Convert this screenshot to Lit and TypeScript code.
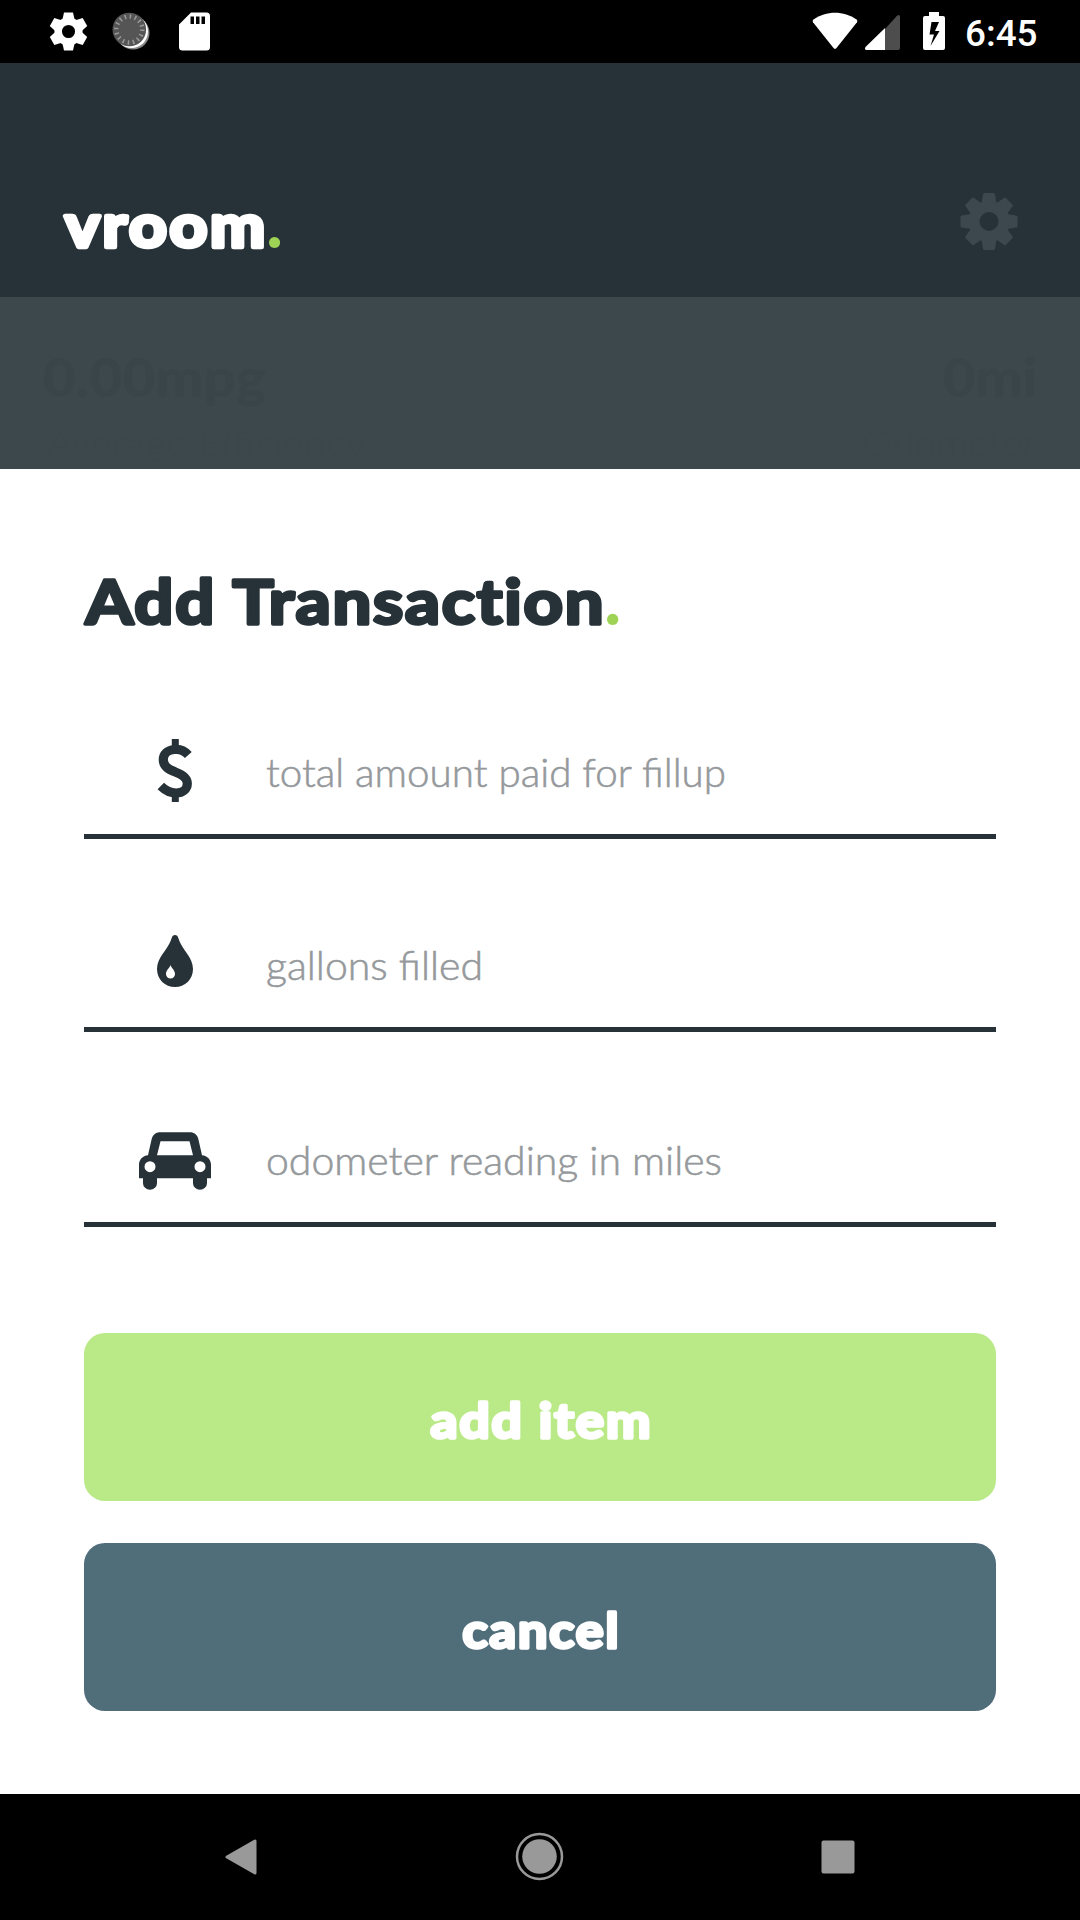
import { LitElement, html, svg, css } from "lit";
import { customElement } from "lit/decorators.js";

interface Fit {
  cls: string;
  w: number;
  h: number;
  x: number;
  y: number;
  len: number;
  text: string;
  dot?: number;
}

/** Draws a line of text fitted to an exact advance, with an optional round accent stop. */
const fit = (f: Fit) => html`<svg class="fit ${f.cls}" width=${f.w} height=${f.h} viewBox="0 0 ${f.w} ${f.h}">
  <text x=${f.x} y=${f.y} textLength=${f.len} lengthAdjust="spacingAndGlyphs">${f.text}</text>
  ${f.dot ? svg`<text class="stop" x=${f.dot} y=${f.y}>.</text>` : null}
</svg>`;

const teeth = (n: number, d: string) =>
  Array.from({ length: n }, (_, i) => svg`<path d=${d} transform="rotate(${(i * 360) / n})"/>`);

const dollar = html`<svg width="36" height="66" viewBox="-0.3 0 36 66">
  <path d="M14.500 2h7v10h-7zM14.500 55h7v10h-7z" fill="#263238"/>
  <path d="M31 18C26 12.500 20 12 17 12.500C10 13 6 17.500 6 22.500C6 30 12 32.500 18 35C26 38 30 41 30 46.500C30 52.500 25 56 19 56C12 56 7 52.500 3.500 49" fill="none" stroke="#263238" stroke-width="9.200"/>
</svg>`;

const drop = html`<svg width="36" height="54" viewBox="0 0 36 54">
  <path fill="#263238" fill-rule="evenodd" d="M18 1C16.300 1 15.300 2 14.800 3.700C11 16 0 23 0 35C0 45.500 8 53 18 53S36 45.500 36 35C36 23 25 16 21.200 3.700C20.700 2 19.700 1 18 1ZM13.500 31C14.500 34.500 18 36 18 40A4.500 4.500 0 0 1 9 40C9 36 12.500 34.500 13.500 31Z"/>
</svg>`;

const car = html`<svg width="73" height="58" viewBox="0.5 0.3 73 58">
  <path fill="#263238" fill-rule="evenodd" d="M22 .5H51C56 .5 59 3 60 8L63.500 23.500C69 24 72.500 28 72.500 33V46.500H68.500V51.500A7 6.500 0 0 1 54.500 51.500V46.500H18.500V51.500A7 6.500 0 0 1 4.500 51.500V46.500H.5V33C.5 28 4 24 9.500 23.500L13 8C14 3 17 .5 22 .5ZM22 9.500L18.500 23.500H54.500L51 9.500ZM11.500 29.500A5.500 5.500 0 1 0 11.500 40.500A5.500 5.500 0 1 0 11.500 29.500ZM61.500 29.500A5.500 5.500 0 1 0 61.500 40.500A5.500 5.500 0 1 0 61.500 29.500Z"/>
</svg>`;

const fields = [
  { icon: dollar, kind: "paid", text: "total amount paid for fillup", len: 460 },
  { icon: drop, kind: "gallons", text: "gallons filled", len: 217 },
  { icon: car, kind: "odometer", text: "odometer reading in miles", len: 456 },
];

@customElement("app-root")
export class AppRoot extends LitElement {
  static styles = css`
    :host { display: flex; flex-direction: column; width: 1080px; height: 1920px; overflow: hidden; background: #fff; font-family: Lato, "Open Sans", sans-serif; }
    svg { display: block; flex: none; }
    .fit { overflow: visible; }
    .bold text { font-weight: 700; stroke-linejoin: round; stroke-linecap: round; font-variant-ligatures: none; }
    .brand text { font-size: 59.500px; fill: #fff; stroke: #fff; stroke-width: 4.500px; letter-spacing: 2.500px; }
    .title text { font-size: 60.500px; fill: #263238; stroke: #263238; stroke-width: 3.400px; letter-spacing: 1.600px; }
    .fit .stop { fill: #9fd356; stroke: #9fd356; stroke-width: 2px; }
    .btn text { font-size: 47.500px; fill: #fff; stroke: #fff; stroke-width: 3.400px; letter-spacing: 1.800px; }
    .hint text { font-size: 40px; font-weight: 300; fill: #95999c; stroke: #95999c; stroke-width: 0.6px; }
    .value text { font-size: 54px; font-weight: 900; fill: #3a454a; }
    .caption text { font-size: 34px; font-weight: 300; fill: #3c474c; }
    .status { height: 63px; background: #000; flex: none; }
    .header { height: 234px; background: #263238; display: flex; justify-content: space-between; box-sizing: border-box; padding: 129px 62.5px 0 62px; flex: none; }
    .stats { height: 172px; background: #3d484d; display: flex; justify-content: space-between; box-sizing: border-box; padding: 50px 44px 0; flex: none; }
    .stat { display: flex; flex-direction: column; }
    .right { align-items: flex-end; }
    .sheet { height: 1325px; box-sizing: border-box; padding: 90px 84px 0; display: flex; flex-direction: column; flex: none; }
    .fields { display: flex; flex-direction: column; margin-top: 43px; }
    .field { box-sizing: border-box; border-bottom: 5px solid #263238; display: flex; align-items: flex-end; }
    .field.paid { height: 147px; }
    .field.gallons { height: 193px; }
    .field.odometer { height: 195px; }
    .icon { width: 182px; display: flex; justify-content: center; flex: none; }
    .paid .icon { padding-bottom: 31px; }
    .gallons .icon { padding-bottom: 39px; }
    .odometer .icon { padding-bottom: 32px; }
    .buttons { display: flex; flex-direction: column; gap: 42px; margin-top: 106px; }
    .button { height: 168px; border-radius: 21px; display: flex; justify-content: center; }
    .add { background: #b9ea87; }
    .cancel { background: #506d7a; }
    .nav { height: 126px; background: #000; flex: none; }
    .clock { font: 500 37px Roboto, sans-serif; fill: #fff; }
  `;

  render() {
    return html`
      <div class="status">
        <svg width="1080" height="63" viewBox="0 0 1080 63">
          <g fill="#fff" transform="translate(68.500 31.500)">
            ${teeth(6, "M-4.500 -19H4.500L6.500 -10H-6.500Z")}
            <circle r="10.300" fill="none" stroke="#fff" stroke-width="7.500"/>
          </g>
          <circle cx="133" cy="33" r="16.500" fill="#888"/>
          <circle cx="131.500" cy="31.500" r="16.500" fill="#fff"/>
          <circle cx="129.300" cy="29.500" r="16.800" fill="#555"/>
          <circle cx="129.300" cy="29.500" r="13" fill="none" stroke="#999" stroke-width="4.500" stroke-dasharray="1.500 3.605"/>
          <path fill="#fff" fill-rule="evenodd" d="M191 12.500H206.500Q210 12.500 210 16V47Q210 50.500 206.500 50.500H182.500Q179 50.500 179 47V24.500ZM190.500 16.500V24H194V16.500ZM196 16.500V24H199.500V16.500ZM201.500 16.500V24H205V16.500Z"/>
          <path fill="#fff" d="M813.500 19.500C826 10.500 844 10.500 856.500 19.500Q858 20.800 857 22.200L836.500 48Q835 49.700 833.500 48L813 22.200Q812 20.800 813.500 19.500Z"/>
          <path fill="#4d4d4d" d="M885 29L897 15.800Q900 13.800 900 17V48Q900 50 898 50H885Z"/>
          <path fill="#fff" d="M885 28V50H866.500Q864 49.500 865.500 47Z"/>
          <path fill="#fff" fill-rule="evenodd" d="M929 12H939V16H943Q945 16 945 18V48Q945 50 943 50H925Q923 50 923 48V18Q923 16 925 16H929ZM931.500 22L929.500 34.500H934L930.500 46L939.500 31H935L939 22Z"/>
          <text class="clock" x="965" y="46" textLength="72.500" lengthAdjust="spacingAndGlyphs">6:45</text>
        </svg>
      </div>

      <div class="header">
        ${fit({ cls: "bold brand", w: 230, h: 80, x: 3, y: 54.5, len: 203, text: "vroom", dot: 205.5 })}
        <svg width="58" height="58" viewBox="-29 -29.4 58 58">
          <g fill="#3d484e">
            ${teeth(8, "M-4.500 -28.500H4.500Q6 -28.500 6 -27L7.500 -18H-7.500L-6 -27Q-6 -28.500 -4.500 -28.500Z")}
            <circle r="15" fill="none" stroke="#3d484e" stroke-width="11"/>
          </g>
        </svg>
      </div>

      <div class="stats">
        <div class="stat">
          ${fit({ cls: "value", w: 220, h: 60, x: -1, y: 50, len: 223, text: "0.00mpg" })}
          ${fit({ cls: "caption", w: 320, h: 50, x: 2, y: 48, len: 320, text: "Average Efficiency" })}
        </div>
        <div class="stat right">
          ${fit({ cls: "value", w: 93, h: 60, x: 0, y: 50, len: 94, text: "0mi" })}
          ${fit({ cls: "caption", w: 174, h: 50, x: 0, y: 48, len: 174, text: "Odometer" })}
        </div>
      </div>

      <div class="sheet">
        ${fit({ cls: "bold title", w: 540, h: 90, x: 1.5, y: 65, len: 520, text: "Add Transaction", dot: 521.5 })}
        <div class="fields">
          ${fields.map(
            (f) => html`<div class="field ${f.kind}">
              <div class="icon">${f.icon}</div>
              ${fit({ cls: "hint", w: 560, h: 90, x: 0, y: f.kind === "paid" ? 42.5 : 43.2, len: f.len, text: f.text })}
            </div>`
          )}
        </div>
        <div class="buttons">
          <div class="button add">${fit({ cls: "bold btn", w: 222, h: 168, x: 1.5, y: 104.5, len: 222, text: "add item" })}</div>
          <div class="button cancel">${fit({ cls: "bold btn", w: 157, h: 168, x: 0.5, y: 104.5, len: 158, text: "cancel" })}</div>
        </div>
      </div>

      <div class="nav">
        <svg width="1080" height="126" viewBox="0 1794 1080 126">
          <path fill="#999" stroke="#999" stroke-width="3" stroke-linejoin="round" d="M227 1857L255 1841V1873Z"/>
          <circle cx="539.500" cy="1856.500" r="22.500" fill="none" stroke="#999" stroke-width="2.500"/>
          <circle cx="539.500" cy="1856.500" r="17.300" fill="#999"/>
          <rect x="821.500" y="1840.500" width="33" height="33" rx="2" fill="#999"/>
        </svg>
      </div>
    `;
  }
}
